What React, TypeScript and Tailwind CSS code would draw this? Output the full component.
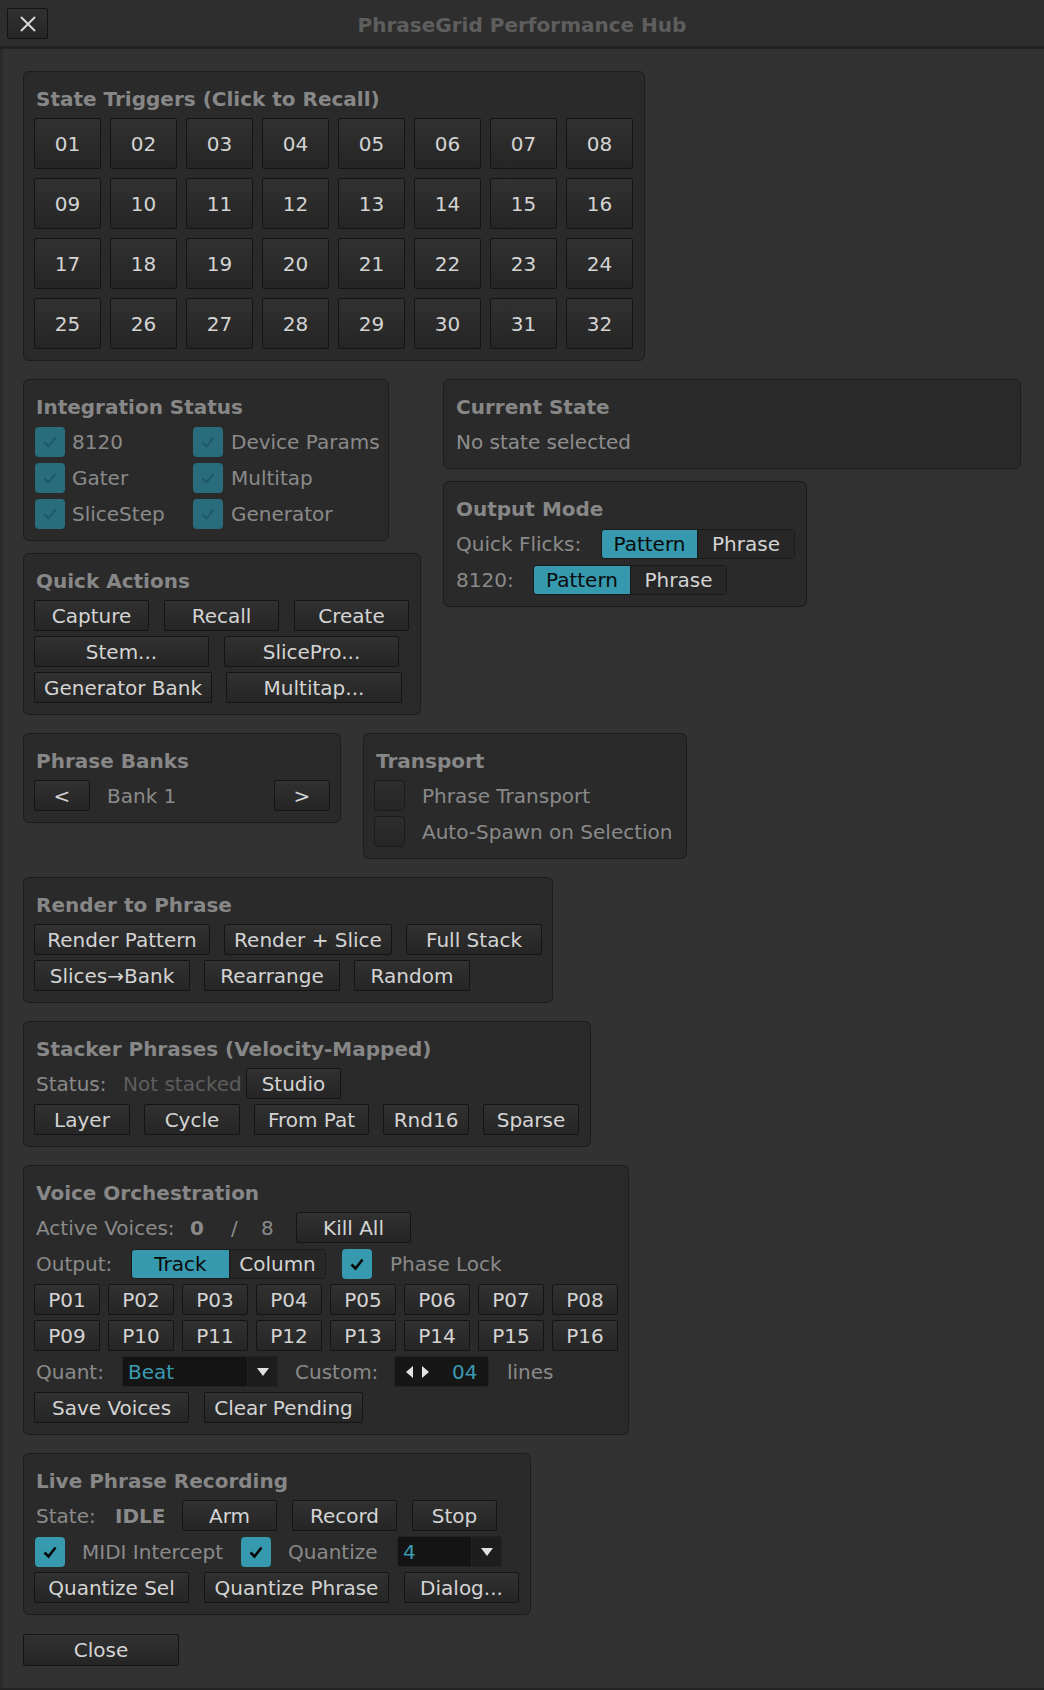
import { ReactNode } from 'react';
import clsx from 'clsx';

const Btn = ({ w, h = 'h-[31px]', children }: { w: string; h?: string; children: ReactNode }) => (
  <div className={clsx('flex shrink-0 items-center justify-center rounded-[2px] border border-[#141414] bg-linear-to-b from-[#313131] to-[#252525] text-[#d4d4d4]', w, h)}>
    {children}
  </div>
);

const Panel = ({ title, w, children }: { title: string; w: string; children: ReactNode }) => (
  <div className={clsx('shrink-0 rounded-[6px] border border-[#1c1c1c] bg-[#2a2a2a] px-[10px] pt-[13px] pb-[11px]', w)}>
    <div className="h-[28px] pl-[2px] leading-[28px] font-bold text-[#878787]">{title}</div>
    <div className="mt-[5px] flex flex-col gap-[5px]">{children}</div>
  </div>
);

const Row = ({ children, className }: { children: ReactNode; className?: string }) => (
  <div className={clsx('flex h-[31px] items-center', className)}>{children}</div>
);

const Check = ({ mode }: { mode: 'on' | 'dim' | 'off' }) => {
  if (mode === 'off') {
    return <div className="h-[31px] w-[31px] shrink-0 rounded-[4px] border border-[#1a1a1a] bg-linear-to-b from-[#2e2e2e] to-[#262626]" />;
  }
  return (
    <div className={clsx('flex h-[30px] w-[30px] shrink-0 items-center justify-center rounded-[4px]', mode === 'on' ? 'bg-[#3799ad]' : 'bg-[#296d7c]')}>
      <svg width="18" height="18" viewBox="0 0 18 18">
        <path d="M3.5 9.5 L7.5 13.5 L14.5 4.5" fill="none" stroke={mode === 'on' ? '#080808' : '#1f5662'} strokeWidth={mode === 'on' ? 2.6 : 1.8} />
      </svg>
    </div>
  );
};

const Seg = ({ a, b, wa, wb }: { a: string; b: string; wa: string; wb: string }) => (
  <div className="flex h-[30px] shrink-0 overflow-hidden rounded-[4px] border border-[#1a1a1a]">
    <div className={clsx('flex items-center justify-center bg-[#3799ad] text-[#0a0a0a]', wa)}>{a}</div>
    <div className={clsx('flex items-center justify-center border-l border-[#1a1a1a] bg-[#272727] text-[#d4d4d4]', wb)}>{b}</div>
  </div>
);

const Drop = ({ value, w }: { value: string; w: string }) => (
  <div className={clsx('flex h-[31px] shrink-0 overflow-hidden rounded-[2px] border border-[#222]', w)}>
    <div className="flex flex-1 items-center bg-[#141414] pl-[5px] text-[#3a9bb0]">{value}</div>
    <div className="flex w-[30px] items-center justify-center border-l border-[#222] bg-[#1d1d1d]">
      <svg width="12" height="10" viewBox="0 0 12 10"><path d="M0 1 H12 L6 9 Z" fill="#e0e0e0" /></svg>
    </div>
  </div>
);

const Label = ({ w, children, className }: { w?: string; children: ReactNode; className?: string }) => (
  <span className={clsx('shrink-0 whitespace-nowrap text-[#8a8a8a]', w, className)}>{children}</span>
);

export default function App() {
  const states = Array.from({ length: 32 }, (_, i) => String(i + 1).padStart(2, '0'));
  const pads = Array.from({ length: 16 }, (_, i) => 'P' + String(i + 1).padStart(2, '0'));

  return (
    <div className="flex h-[1690px] w-[1044px] flex-col overflow-hidden border-b-2 border-[#242424] bg-[#323232] font-['DejaVu_Sans',sans-serif] text-[20px] leading-none">
      <div className="relative flex h-[49px] shrink-0 items-center justify-center border-b-[3px] border-[#232323] bg-[#2e2e2e]">
        <div className="absolute left-[7px] top-[8px] flex h-[31px] w-[41px] items-center justify-center rounded-[2px] border border-[#141414] bg-linear-to-b from-[#313131] to-[#262626]">
          <svg width="18" height="18" viewBox="0 0 18 18"><path d="M2 2 L16 16 M16 2 L2 16" stroke="#dcdcdc" strokeWidth="1.8" /></svg>
        </div>
        <span className="mt-[3px] font-bold text-[#5e5e5e]">PhraseGrid Performance Hub</span>
      </div>

      <div className="flex flex-1 flex-col items-start gap-[18px] border-l-[3px] border-[#2a2a2a] pl-[20px] pt-[22px]">
        <Panel title="State Triggers (Click to Recall)" w="w-[622px]">
          <div className="grid grid-cols-[repeat(8,67px)] gap-[9px]">
            {states.map((s) => (
              <Btn key={s} w="w-[67px]" h="h-[51px]">{s}</Btn>
            ))}
          </div>
        </Panel>

        <div className="flex items-start gap-[22px]">
          <div className="flex w-[398px] flex-col items-start gap-[12px]">
            <Panel title="Integration Status" w="w-[366px]">
              {[
                ['8120', 'Device Params'],
                ['Gater', 'Multitap'],
                ['SliceStep', 'Generator'],
              ].map(([a, b]) => (
                <div key={a} className="flex h-[31px] items-center pl-[1px]">
                  <Check mode="dim" />
                  <Label w="w-[128px]" className="pl-[7px]">{a}</Label>
                  <Check mode="dim" />
                  <Label className="pl-[8px]">{b}</Label>
                </div>
              ))}
            </Panel>
            <Panel title="Quick Actions" w="w-[398px]">
              <Row className="gap-[15px]">
                <Btn w="w-[115px]">Capture</Btn>
                <Btn w="w-[115px]">Recall</Btn>
                <Btn w="w-[115px]">Create</Btn>
              </Row>
              <Row className="gap-[15px]">
                <Btn w="w-[175px]">Stem...</Btn>
                <Btn w="w-[175px]">SlicePro...</Btn>
              </Row>
              <Row className="gap-[14px]">
                <Btn w="w-[178px]">Generator Bank</Btn>
                <Btn w="w-[176px]">Multitap...</Btn>
              </Row>
            </Panel>
          </div>
          <div className="flex flex-col items-start gap-[12px]">
            <Panel title="Current State" w="w-[578px]">
              <Row>
                <span className="pl-[2px] text-[#8e8e8e]">No state selected</span>
              </Row>
            </Panel>
            <Panel title="Output Mode" w="w-[364px]">
              <Row>
                <Label w="w-[147px]" className="pl-[2px]">Quick Flicks:</Label>
                <Seg a="Pattern" b="Phrase" wa="w-[95px]" wb="w-[97px]" />
              </Row>
              <Row>
                <Label w="w-[79px]" className="pl-[2px]">8120:</Label>
                <Seg a="Pattern" b="Phrase" wa="w-[96px]" wb="w-[96px]" />
              </Row>
            </Panel>
          </div>
        </div>

        <div className="flex items-start gap-[22px]">
          <Panel title="Phrase Banks" w="w-[318px]">
            <Row>
              <Btn w="w-[56px]">&lt;</Btn>
              <Label className="ml-[17px] flex-1">Bank 1</Label>
              <Btn w="w-[56px]">&gt;</Btn>
            </Row>
          </Panel>
          <Panel title="Transport" w="w-[324px]">
            <Row>
              <Check mode="off" />
              <Label className="pl-[17px]">Phrase Transport</Label>
            </Row>
            <Row>
              <Check mode="off" />
              <Label className="pl-[17px]">Auto-Spawn on Selection</Label>
            </Row>
          </Panel>
        </div>

        <Panel title="Render to Phrase" w="w-[530px]">
          <Row className="gap-[14px]">
            <Btn w="w-[176px]">Render Pattern</Btn>
            <Btn w="w-[168px]">Render + Slice</Btn>
            <Btn w="w-[136px]">Full Stack</Btn>
          </Row>
          <Row className="gap-[14px]">
            <Btn w="w-[156px]">Slices→Bank</Btn>
            <Btn w="w-[136px]">Rearrange</Btn>
            <Btn w="w-[116px]">Random</Btn>
          </Row>
        </Panel>

        <Panel title="Stacker Phrases (Velocity-Mapped)" w="w-[568px]">
          <Row>
            <Label w="w-[89px]" className="pl-[2px]">Status:</Label>
            <span className="w-[123px] shrink-0 text-[#5e5e5e]">Not stacked</span>
            <Btn w="w-[95px]">Studio</Btn>
          </Row>
          <Row className="gap-[14px]">
            <Btn w="w-[96px]">Layer</Btn>
            <Btn w="w-[96px]">Cycle</Btn>
            <Btn w="w-[115px]">From Pat</Btn>
            <Btn w="w-[86px]">Rnd16</Btn>
            <Btn w="w-[96px]">Sparse</Btn>
          </Row>
        </Panel>

        <Panel title="Voice Orchestration" w="w-[606px]">
          <Row>
            <Label w="w-[156px]" className="pl-[2px]">Active Voices:</Label>
            <span className="w-[41px] shrink-0 font-bold text-[#8a8a8a]">0</span>
            <Label w="w-[30px]">/</Label>
            <Label w="w-[35px]">8</Label>
            <Btn w="w-[115px]">Kill All</Btn>
          </Row>
          <Row>
            <Label w="w-[97px]" className="pl-[2px]">Output:</Label>
            <Seg a="Track" b="Column" wa="w-[97px]" wb="w-[96px]" />
            <div className="ml-[16px]"><Check mode="on" /></div>
            <Label className="pl-[18px]">Phase Lock</Label>
          </Row>
          <div className="grid grid-cols-[repeat(8,66px)] gap-x-[8px] gap-y-[5px]">
            {pads.map((p) => (
              <Btn key={p} w="w-[66px]">{p}</Btn>
            ))}
          </div>
          <Row>
            <Label w="w-[88px]" className="pl-[2px]">Quant:</Label>
            <Drop value="Beat" w="w-[156px]" />
            <Label w="w-[116px]" className="pl-[17px]">Custom:</Label>
            <div className="flex h-[31px] w-[95px] shrink-0 items-center rounded-[3px] border border-[#222] bg-[#161616] pl-[10px]">
              <svg width="30" height="14" viewBox="0 0 30 14">
                <path d="M8 1 L1 7 L8 13 Z" fill="#e4e4e4" />
                <path d="M17 1 L24 7 L17 13 Z" fill="#e4e4e4" />
              </svg>
              <span className="ml-[17px] text-[#3a9bb0]">04</span>
            </div>
            <Label className="pl-[18px]">lines</Label>
          </Row>
          <Row className="gap-[15px]">
            <Btn w="w-[155px]">Save Voices</Btn>
            <Btn w="w-[159px]">Clear Pending</Btn>
          </Row>
        </Panel>

        <Panel title="Live Phrase Recording" w="w-[508px]">
          <Row>
            <Label w="w-[81px]" className="pl-[2px]">State:</Label>
            <span className="w-[67px] shrink-0 font-bold text-[#8a8a8a]">IDLE</span>
            <Btn w="w-[95px]">Arm</Btn>
            <div className="w-[15px]" />
            <Btn w="w-[105px]">Record</Btn>
            <div className="w-[15px]" />
            <Btn w="w-[85px]">Stop</Btn>
          </Row>
          <Row className="pl-[1px]">
            <Check mode="on" />
            <Label w="w-[176px]" className="pl-[17px]">MIDI Intercept</Label>
            <Check mode="on" />
            <Label w="w-[126px]" className="pl-[17px]">Quantize</Label>
            <Drop value="4" w="w-[105px]" />
          </Row>
          <Row className="gap-[15px]">
            <Btn w="w-[155px]">Quantize Sel</Btn>
            <Btn w="w-[185px]">Quantize Phrase</Btn>
            <Btn w="w-[115px]">Dialog...</Btn>
          </Row>
        </Panel>

        <div className="mt-[1px]">
          <Btn w="w-[156px]" h="h-[32px]">Close</Btn>
        </div>
      </div>
    </div>
  );
}
